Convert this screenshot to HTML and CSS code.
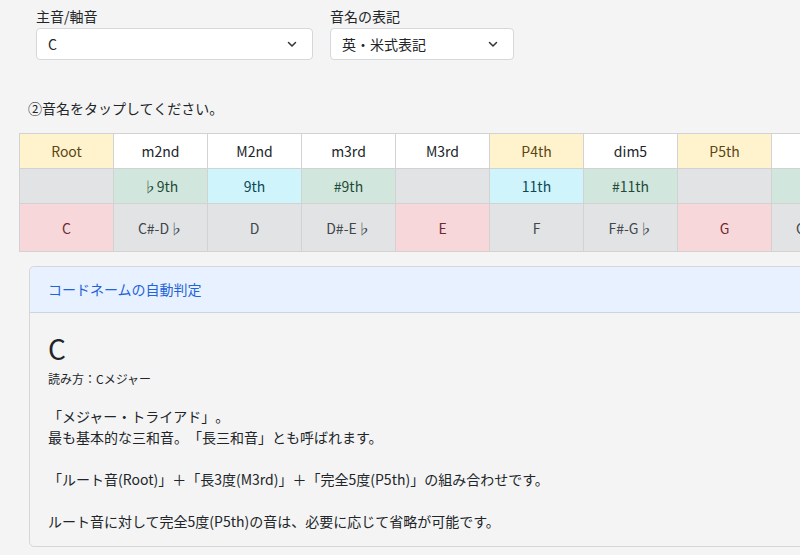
FILE: index.html
```html
<!DOCTYPE html>
<html lang="ja">
<head>
<meta charset="utf-8">
<link rel="stylesheet" href="styles.css">
</head>
<body>
<div class="page">
  <div class="form-row">
    <div class="field field-key">
      <label class="field-label">主音/軸音</label>
      <div class="select"><span>C</span><svg class="chev" viewBox="0 0 12 12" width="12" height="12"><path d="M2.5 4.5 L6 8 L9.5 4.5" fill="none" stroke="#333" stroke-width="1.5" stroke-linecap="round" stroke-linejoin="round"/></svg></div>
    </div>
    <div class="field field-notation">
      <label class="field-label">音名の表記</label>
      <div class="select"><span>英・米式表記</span><svg class="chev" viewBox="0 0 12 12" width="12" height="12"><path d="M2.5 4.5 L6 8 L9.5 4.5" fill="none" stroke="#333" stroke-width="1.5" stroke-linecap="round" stroke-linejoin="round"/></svg></div>
    </div>
  </div>

  <p class="instruction">②音名をタップしてください。</p>

  <div class="table-wrap">
    <table class="notes">
      <tr class="r-interval">
        <td class="c-warn">Root</td>
        <td>m2nd</td>
        <td>M2nd</td>
        <td>m3rd</td>
        <td>M3rd</td>
        <td class="c-warn">P4th</td>
        <td>dim5</td>
        <td class="c-warn">P5th</td>
        <td>m6th</td>
        <td>M6th</td>
        <td>m7th</td>
        <td>M7th</td>
      </tr>
      <tr class="r-tension">
        <td class="c-gray"></td>
        <td class="c-green">♭9th</td>
        <td class="c-cyan">9th</td>
        <td class="c-green">#9th</td>
        <td class="c-gray"></td>
        <td class="c-cyan">11th</td>
        <td class="c-green">#11th</td>
        <td class="c-gray"></td>
        <td class="c-green">♭13th</td>
        <td class="c-cyan">13th</td>
        <td class="c-gray"></td>
        <td class="c-gray"></td>
      </tr>
      <tr class="r-note">
        <td class="c-red">C</td>
        <td class="c-gray">C#-D♭</td>
        <td class="c-gray">D</td>
        <td class="c-gray">D#-E♭</td>
        <td class="c-red">E</td>
        <td class="c-gray">F</td>
        <td class="c-gray">F#-G♭</td>
        <td class="c-red">G</td>
        <td class="c-gray">G#-A♭</td>
        <td class="c-gray">A</td>
        <td class="c-gray">A#-B♭</td>
        <td class="c-gray">B</td>
      </tr>
    </table>
  </div>

  <div class="card">
    <div class="card-header">コードネームの自動判定</div>
    <div class="card-body">
      <h2 class="chord">C</h2>
      <p class="reading">読み方：Cメジャー</p>
      <p class="desc">「メジャー・トライアド」。<br>最も基本的な三和音。「長三和音」とも呼ばれます。<br><br>「ルート音(Root)」＋「長3度(M3rd)」＋「完全5度(P5th)」の組み合わせです。<br><br>ルート音に対して完全5度(P5th)の音は、必要に応じて省略が可能です。</p>
    </div>
  </div>
</div>
</body>
</html>
```
FILE: styles.css
```css
html, body {
  margin: 0;
  padding: 0;
  background: #f4f4f4;
  overflow: hidden;
}
body {
  font-family: "Noto Sans CJK JP", "Noto Sans", sans-serif;
  color: #212529;
  font-size: 14px;
  width: 800px;
  height: 555px;
  text-spacing-trim: space-all;
}
.page {
  width: 1200px;
}
.form-row {
  display: flex;
  gap: 17px;
  padding: 6px 0 0 36px;
}
.field {
  display: flex;
  flex-direction: column;
}
.field-key { width: 277px; }
.field-notation { width: 184px; }
.field-label {
  font-size: 14px;
  line-height: 20px;
  margin-bottom: 2px;
  color: #212529;
}
.select {
  height: 30px;
  border: 1px solid #d4d7db;
  border-radius: 4px;
  background: #fff;
  display: flex;
  align-items: center;
  justify-content: space-between;
  padding: 0 14px 0 11px;
  font-size: 14px;
}
.chev { display: block; }
.instruction {
  margin: 38px 0 0 28px;
  font-size: 14px;
  line-height: 20px;
}
.table-wrap {
  margin: 15px 0 0 19px;
}
.notes {
  border-collapse: collapse;
  table-layout: fixed;
}
.notes td {
  width: 93px;
  border: 1px solid #d2d2d2;
  text-align: center;
  font-size: 14px;
  padding: 0;
  background: #fff;
  color: #212529;
  white-space: nowrap;
}
.r-interval td { height: 34px; }
.r-tension td { height: 34px; }
.r-note td { height: 47px; }
.notes td.c-warn { background: #fff3cd; color: #5b4614; }
.notes td.c-gray { background: #e2e3e5; color: #41464b; }
.notes td.c-green { background: #d1e7dd; color: #1f4c38; }
.notes td.c-cyan { background: #cff4fc; color: #0b4a57; }
.notes td.c-red { background: #f8d7da; color: #6e2a2f; }

.card {
  margin: 14px 0 0 29px;
  width: 1100px;
  border: 1px solid #d6d6d6;
  border-radius: 5px;
  background: #f4f4f4;
}
.card-header {
  background: #e7f1ff;
  border-bottom: 1px solid #cdd6e0;
  border-radius: 5px 5px 0 0;
  color: #1f64d8;
  font-size: 14px;
  line-height: 21px;
  padding: 12px 18px;
}
.card-body {
  padding: 18px 18px 14px 18px;
}
.chord {
  margin: 0;
  font-size: 28px;
  font-weight: 400;
  line-height: 34px;
}
.reading {
  margin: 5px 0 0 0;
  font-size: 12px;
  line-height: 17px;
}
.desc {
  margin: 19px 0 0 0;
  font-size: 14px;
  line-height: 21px;
}
```
